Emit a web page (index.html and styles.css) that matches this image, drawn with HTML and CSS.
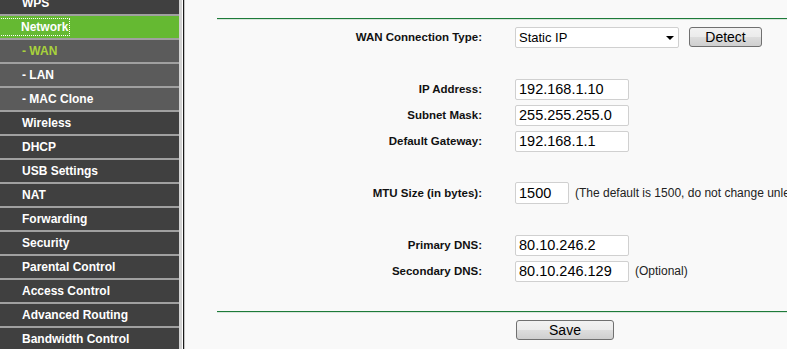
FILE: index.html
```html
<!DOCTYPE html>
<html lang="en">
  <head>
    <meta charset="UTF-8" />
    <title>WAN</title>
    <link rel="stylesheet" href="styles.css">
  </head>
  <body>
    <div class="menu">
      <ul>
        <li><a href="#">WPS</a></li>
        <li class="active"><a href="#" class="focused">Network</a></li>
        <li class="sub current"><a href="#">- WAN</a></li>
        <li class="sub"><a href="#">- LAN</a></li>
        <li class="sub"><a href="#">- MAC Clone</a></li>
        <li><a href="#">Wireless</a></li>
        <li><a href="#">DHCP</a></li>
        <li><a href="#">USB Settings</a></li>
        <li><a href="#">NAT</a></li>
        <li><a href="#">Forwarding</a></li>
        <li><a href="#">Security</a></li>
        <li><a href="#">Parental Control</a></li>
        <li><a href="#">Access Control</a></li>
        <li><a href="#">Advanced Routing</a></li>
        <li><a href="#">Bandwidth Control</a></li>
      </ul>
    </div>
    <div class="frame-edge"></div>

    <div class="main">
      <div class="rule"></div>

      <table class="form">
        <colgroup>
          <col class="label-col" />
          <col class="field-col" />
        </colgroup>
        <tr>
          <td class="label">WAN Connection Type:</td>
          <td class="field">
            <span class="select-wrap">
              <select class="wide">
                <option>Static IP</option>
              </select>
            </span><button class="btn detect">Detect</button>
          </td>
        </tr>
        <tr class="gap"><td colspan="2"></td></tr>
        <tr>
          <td class="label">IP Address:</td>
          <td class="field"><input type="text" value="192.168.1.10" /></td>
        </tr>
        <tr>
          <td class="label">Subnet Mask:</td>
          <td class="field"><input type="text" value="255.255.255.0" /></td>
        </tr>
        <tr>
          <td class="label">Default Gateway:</td>
          <td class="field"><input type="text" value="192.168.1.1" /></td>
        </tr>
        <tr class="gap"><td colspan="2"></td></tr>
        <tr>
          <td class="label">MTU Size (in bytes):</td>
          <td class="field">
            <input type="text" class="short" value="1500" /><span class="hint">(The default is 1500, do not change unless necessary.)</span>
          </td>
        </tr>
        <tr class="gap"><td colspan="2"></td></tr>
        <tr>
          <td class="label">Primary DNS:</td>
          <td class="field"><input type="text" value="80.10.246.2" /></td>
        </tr>
        <tr>
          <td class="label">Secondary DNS:</td>
          <td class="field">
            <input type="text" value="80.10.246.129" /><span class="hint">(Optional)</span>
          </td>
        </tr>
        <tr class="gap"><td colspan="2"></td></tr>
      </table>

      <div class="rule"></div>

      <div class="actions">
        <button class="btn save">Save</button>
      </div>
    </div>
  </body>
</html>
```

FILE: styles.css
```css
body {
  margin: 0;
  padding: 0;
  display: flex;
  height: 349px;
  overflow: hidden;
  font-family: "Liberation Sans", Arial, sans-serif;
  background-color: #f9f9f9;
}

/* left menu */
.menu {
  width: 179px;
  flex-shrink: 0;
  margin-top: -8px;
  background-color: #404040;
}

.menu ul {
  list-style: none;
  margin: 0;
  padding: 0;
}

.menu li {
  display: flex;
  align-items: center;
  height: 22px;
  border-bottom: 2px solid #a0a0a0;
  background-color: #404040;
}

.menu a {
  display: inline-block;
  padding-left: 22px;
  line-height: 16px;
  color: #fff;
  font-size: 12px;
  font-weight: bold;
  text-decoration: none;
}

.menu li.sub {
  background-color: #5b5b5b;
}

.menu li.active {
  background-color: #65b932;
}

.menu li.current a {
  color: #a9d23b;
}

.menu a.focused {
  padding-left: 21px;
  padding-right: 1px;
  outline: 1px dotted #fff;
}

.frame-edge {
  width: 1px;
  flex-shrink: 0;
  background-color: #fff;
  border-left: 3px solid #d2d2d2;
  border-right: 1px solid #1a1a1a;
}

/* content */
.main {
  flex: 1;
  min-width: 0;
  border-left: 1px solid #c4c4c4;
  padding: 18px 0 0 32px;
  overflow: hidden;
}

.rule {
  width: 900px;
  height: 1px;
  background-color: #1e7b3a;
  border-bottom: 1px solid #d8e6dc;
}

.form {
  table-layout: fixed;
  width: 800px;
  border-collapse: collapse;
  margin-top: 4px;
  margin-bottom: 1px;
}

.label-col {
  width: 265px;
}

.form td {
  height: 26px;
  padding: 0;
}

.form .label {
  text-align: right;
  font-size: 11.5px;
  font-weight: bold;
  color: #111;
}

.form .field {
  padding-left: 33px;
  white-space: nowrap;
  font-size: 12px;
  color: #222;
}

input {
  box-sizing: border-box;
  width: 114px;
  height: 21px;
  padding: 0 3px;
  border: 1px solid #d0d0d0;
  border-radius: 2px;
  background-color: #fff;
  font-family: "Liberation Sans", Arial, sans-serif;
  font-size: 14.5px;
  color: #000;
  vertical-align: middle;
}

input.short {
  width: 54px;
  height: 22px;
}

.select-wrap {
  position: relative;
  display: inline-block;
  vertical-align: middle;
}

.select-wrap::after {
  content: "";
  position: absolute;
  right: 5px;
  top: 9px;
  border-left: 4px solid transparent;
  border-right: 4px solid transparent;
  border-top: 4px solid #000;
  pointer-events: none;
}

select.wide {
  display: block;
  box-sizing: border-box;
  width: 164px;
  height: 21px;
  padding: 0 3px;
  border: 1px solid #d0d0d0;
  border-radius: 2px;
  background-color: #fff;
  -webkit-appearance: none;
  appearance: none;
  font-family: "Liberation Sans", Arial, sans-serif;
  font-size: 13px;
  color: #000;
}

.hint {
  margin-left: 6px;
  vertical-align: middle;
}

.btn {
  box-sizing: border-box;
  height: 20px;
  padding: 0;
  border: 1px solid #707070;
  border-radius: 3px;
  background: linear-gradient(#f2f2f2, #ebebeb 50%, #dddddd 51%, #cfcfcf);
  font-family: "Liberation Sans", Arial, sans-serif;
  font-size: 14px;
  color: #000;
  vertical-align: middle;
}

.detect {
  width: 73px;
  margin-left: 10px;
}

.actions {
  padding: 7px 0 0 299px;
}

.save {
  width: 98px;
}
```
